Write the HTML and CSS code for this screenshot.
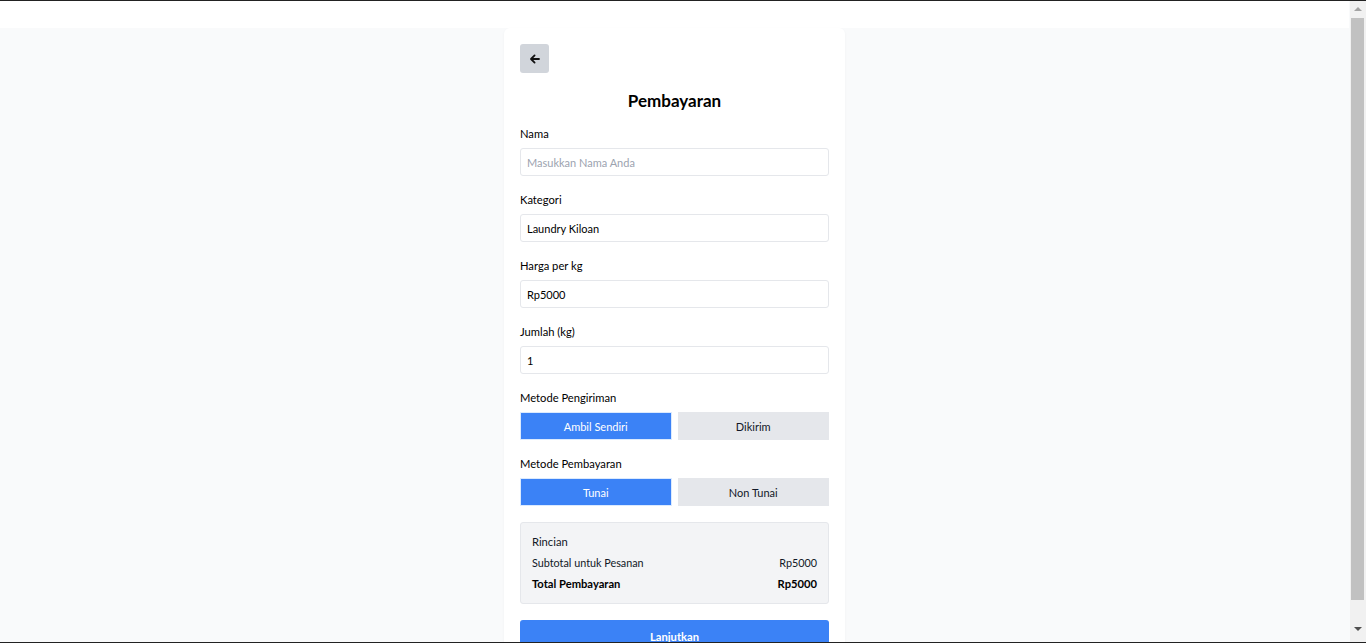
FILE: index.html
```html
<!DOCTYPE html>
<html lang="id">
<head>
<meta charset="utf-8">
<title>Pembayaran</title>
<link rel="stylesheet" href="styles.css">
</head>
<body>
<header class="topbar"></header>
<main class="page">
  <section class="card">
    <button class="back" type="button" aria-label="Kembali">
      <svg width="12" height="12" viewBox="0 0 12 12" fill="none" stroke="#111" stroke-width="1.8" stroke-linecap="round" stroke-linejoin="round"><path d="M10 6H2.2M5.6 2.4 2 6l3.6 3.6"/></svg>
    </button>
    <h1 class="title">Pembayaran</h1>
    <div class="field">
      <label class="label">Nama</label>
      <input class="input" type="text" placeholder="Masukkan Nama Anda">
    </div>
    <div class="field">
      <label class="label">Kategori</label>
      <input class="input" type="text" value="Laundry Kiloan">
    </div>
    <div class="field">
      <label class="label">Harga per kg</label>
      <input class="input" type="text" value="Rp5000">
    </div>
    <div class="field">
      <label class="label">Jumlah (kg)</label>
      <input class="input" type="text" value="1">
    </div>
    <div class="field">
      <label class="label">Metode Pengiriman</label>
      <div class="choices">
        <button class="choice active" type="button">Ambil Sendiri</button>
        <button class="choice" type="button">Dikirim</button>
      </div>
    </div>
    <div class="field">
      <label class="label">Metode Pembayaran</label>
      <div class="choices">
        <button class="choice active" type="button">Tunai</button>
        <button class="choice" type="button">Non Tunai</button>
      </div>
    </div>
    <div class="summary">
      <div class="summary-title">Rincian</div>
      <div class="row"><span>Subtotal untuk Pesanan</span><span>Rp5000</span></div>
      <div class="row total"><span>Total Pembayaran</span><span>Rp5000</span></div>
    </div>
    <button class="submit" type="button">Lanjutkan</button>
  </section>
</main>
<div class="scrollbar" aria-hidden="true">
  <span class="sb-arrow up"></span>
  <span class="sb-thumb"></span>
  <span class="sb-arrow down"></span>
</div>
<div class="frame-top"></div>
<div class="frame-bottom"></div>
</body>
</html>
```
FILE: styles.css
```css
* { box-sizing: border-box; }
html, body { margin: 0; padding: 0; }
html { background: #f9fafb; }
body {
  margin-right: 17px;
  font-family: "Lato", "Noto Sans", sans-serif;
  font-size: 11px;
  color: #111827;
  background: #f9fafb;
}
.topbar {
  height: 28px;
  background: #fff;
}
.page {
  display: flex;
  justify-content: center;
}
.card {
  width: 341px;
  background: #fff;
  border-radius: 6px;
  box-shadow: 0 1px 3px rgba(0,0,0,0.04);
  padding: 16px 16px 20px;
}
.back {
  width: 29px;
  height: 29px;
  border: 0;
  border-radius: 3px;
  background: #d1d5db;
  display: flex;
  align-items: center;
  justify-content: center;
  padding: 0;
}
.title {
  margin: 16px 0 13px;
  font-size: 17px;
  line-height: 24px;
  font-weight: 700;
  text-align: center;
  color: #000;
}
.field { margin-bottom: 16px; }
.label {
  display: block;
  line-height: 16px;
  margin-bottom: 6px;
  font-size: 11.2px;
  color: #000;
}
.input {
  display: block;
  width: 100%;
  height: 28px;
  border: 1px solid #e5e7eb;
  border-radius: 3px;
  padding: 0 6px;
  font: inherit;
  font-size: 11px;
  color: #000;
  background: #fff;
}
.input::placeholder { color: #9ca3af; }
.choices {
  display: grid;
  grid-template-columns: 1fr 1fr;
  gap: 6px;
}
.choice {
  height: 28px;
  border: 0;
  background: #e5e7eb;
  font: inherit;
  font-size: 11px;
  color: #111827;
}
.choice.active {
  background: #3b82f6;
  color: #fff;
  border: 1px solid #dbeafe;
}
.summary {
  background: #f3f4f6;
  border: 1px solid #e5e7eb;
  border-radius: 3px;
  padding: 11px 11px;
}
.summary-title { line-height: 16px; margin-bottom: 5px; font-size: 11.2px; }
.row {
  display: flex;
  justify-content: space-between;
  line-height: 16px;
  font-size: 10.8px;
}
.row + .row { margin-top: 5px; }
.row.total { font-weight: 700; color: #000; font-size: 11.2px; }
.submit {
  display: block;
  width: 100%;
  height: 32px;
  margin-top: 16px;
  border: 0;
  border-radius: 3px;
  background: #3b82f6;
  color: #fff;
  font: inherit;
  font-weight: 700;
  font-size: 11.2px;
}
.scrollbar {
  position: fixed;
  top: 0;
  right: 0;
  bottom: 0;
  width: 16px;
  background: #f1f1f1;
}
.sb-thumb {
  position: absolute;
  left: 1px;
  right: 2px;
  top: 18px;
  height: 582px;
  background: #c1c1c1;
}
.sb-arrow {
  position: absolute;
  left: 4px;
  width: 0;
  height: 0;
  border-left: 4px solid transparent;
  border-right: 4px solid transparent;
}
.sb-arrow.up { top: 7px; border-bottom: 4px solid #a3a3a3; }
.sb-arrow.down { bottom: 12px; border-top: 4px solid #505050; }
.frame-top, .frame-bottom {
  position: fixed;
  left: 0;
  right: 0;
  height: 1px;
  background: #222;
}
.frame-top { top: 0; }
.frame-bottom { bottom: 0; }
```
